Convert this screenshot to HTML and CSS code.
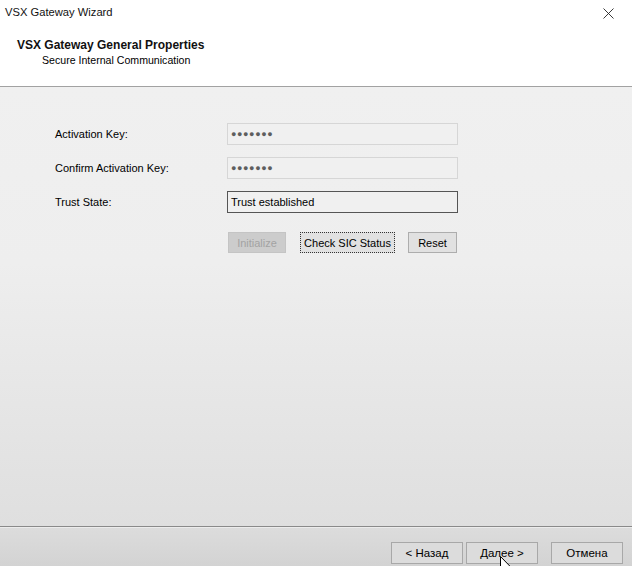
FILE: index.html
```
<!DOCTYPE html>
<html>
<head>
<meta charset="utf-8">
<link rel="stylesheet" href="styles.css">
</head>
<body>
<div class="window">
  <div class="titlebar">
    <span class="title">VSX Gateway Wizard</span>
    <svg class="close" width="11" height="11" viewBox="0 0 11 11"><path d="M0.5 0.5L10.5 10.5M10.5 0.5L0.5 10.5" stroke="#222" stroke-width="0.9" fill="none"/></svg>
  </div>
  <div class="header">
    <div class="heading">VSX Gateway General Properties</div>
    <div class="subheading">Secure Internal Communication</div>
  </div>
  <div class="content">
    <div class="form">
      <label class="label">Activation Key:</label>
      <div class="field disabled"><span class="dots">●●●●●●●</span></div>
      <label class="label">Confirm Activation Key:</label>
      <div class="field disabled"><span class="dots">●●●●●●●</span></div>
      <label class="label">Trust State:</label>
      <div class="field readonly">Trust established</div>
      <div class="actions">
        <button class="btn btn-init" disabled>Initialize</button>
        <button class="btn btn-check"><span class="focus">Check SIC Status</span></button>
        <button class="btn btn-reset">Reset</button>
      </div>
    </div>
  </div>
  <div class="footer">
    <button class="btn nav">&lt; Назад</button>
    <button class="btn nav next">Далее &gt;</button>
    <button class="btn nav cancel">Отмена</button>
    <svg class="cursor" width="12" height="19" viewBox="0 0 12 19"><path d="M0.5 0.5L0.5 15.5L4 12L6.5 18L8.5 17.2L6 11.3L11 11.3Z" fill="#fff" stroke="#000" stroke-width="1"/></svg>
  </div>
</div>
</body>
</html>
```
FILE: styles.css
```
* { box-sizing: border-box; }
html, body {
  margin: 0;
  padding: 0;
  width: 632px;
  height: 566px;
  overflow: hidden;
  font-family: "Liberation Sans", Arial, sans-serif;
  font-size: 11px;
  color: #000;
}
.window {
  display: flex;
  flex-direction: column;
  width: 632px;
  height: 566px;
  background: #fff;
}
.titlebar {
  height: 30px;
  display: flex;
  align-items: flex-start;
  justify-content: space-between;
  padding: 6px 0 0 5px;
  background: #fff;
}
.title {
  font-size: 11.2px;
  color: #111;
}
.close {
  margin: 2px 18px 0 0;
}
.header {
  height: 57px;
  padding: 8px 0 0 17px;
  background: #fff;
  border-bottom: 1px solid #a2a2a2;
}
.heading {
  font-weight: bold;
  font-size: 12px;
  line-height: 14px;
  color: #111;
}
.subheading {
  font-size: 10.6px;
  line-height: 14px;
  margin: 1px 0 0 25px;
}
.content {
  flex: 1;
  background: linear-gradient(#f0f0f0, #eeeeee 40%, #dfdfdf);
  padding: 36px 0 0 55px;
  border-bottom: 1px solid #8a8a8a;
}
.form {
  display: grid;
  grid-template-columns: 172px 231px;
  grid-auto-rows: 22px;
  row-gap: 12px;
  align-items: center;
}
.label {
  font-size: 11px;
  margin-top: -1px;
}
.field {
  height: 22px;
  display: flex;
  align-items: center;
  padding-left: 3px;
  font-size: 11px;
}
.field.disabled {
  background: #f0f0f0;
  border: 1px solid #d6d6d6;
}
.dots {
  font-size: 9px;
  letter-spacing: 0.6px;
  color: #5e5e5e;
}
.field.readonly {
  background: #f0f0f0;
  border: 1px solid #555;
}
.actions {
  grid-column: 2;
  align-self: start;
  display: flex;
  align-items: center;
  margin-top: 7px;
  padding-left: 1px;
}
.btn {
  font-family: "Liberation Sans", Arial, sans-serif;
  font-size: 11px;
  color: #000;
  height: 21px;
  padding: 0;
  background: #e1e1e1;
  border: 1px solid #adadad;
  border-radius: 0;
  display: flex;
  align-items: center;
  justify-content: center;
}
.btn-init {
  width: 58px;
  background: #cccccc;
  border-color: #c4c4c4;
  color: #a3a3a3;
}
.btn-check {
  width: 95px;
  margin-left: 14px;
  border: 1px dotted #333;
  padding: 0;
}
.focus {
  padding: 0 2px;
}
.btn-reset {
  width: 49px;
  margin-left: 13px;
}
.footer {
  position: relative;
  height: 39px;
  border-top: 1px solid #ececec;
  background: linear-gradient(#dcdcdc, #d3d3d3);
  display: flex;
  align-items: flex-start;
  padding: 14px 0 0 391px;
}
.nav {
  width: 72px;
  height: 22px;
  background: #dcdcdc;
  border-color: #a8a8a8;
  font-size: 11.5px;
}
.next {
  margin-left: 3px;
}
.cancel {
  margin-left: 13px;
}
.cursor {
  position: absolute;
  left: 500px;
  top: 28px;
}
```
